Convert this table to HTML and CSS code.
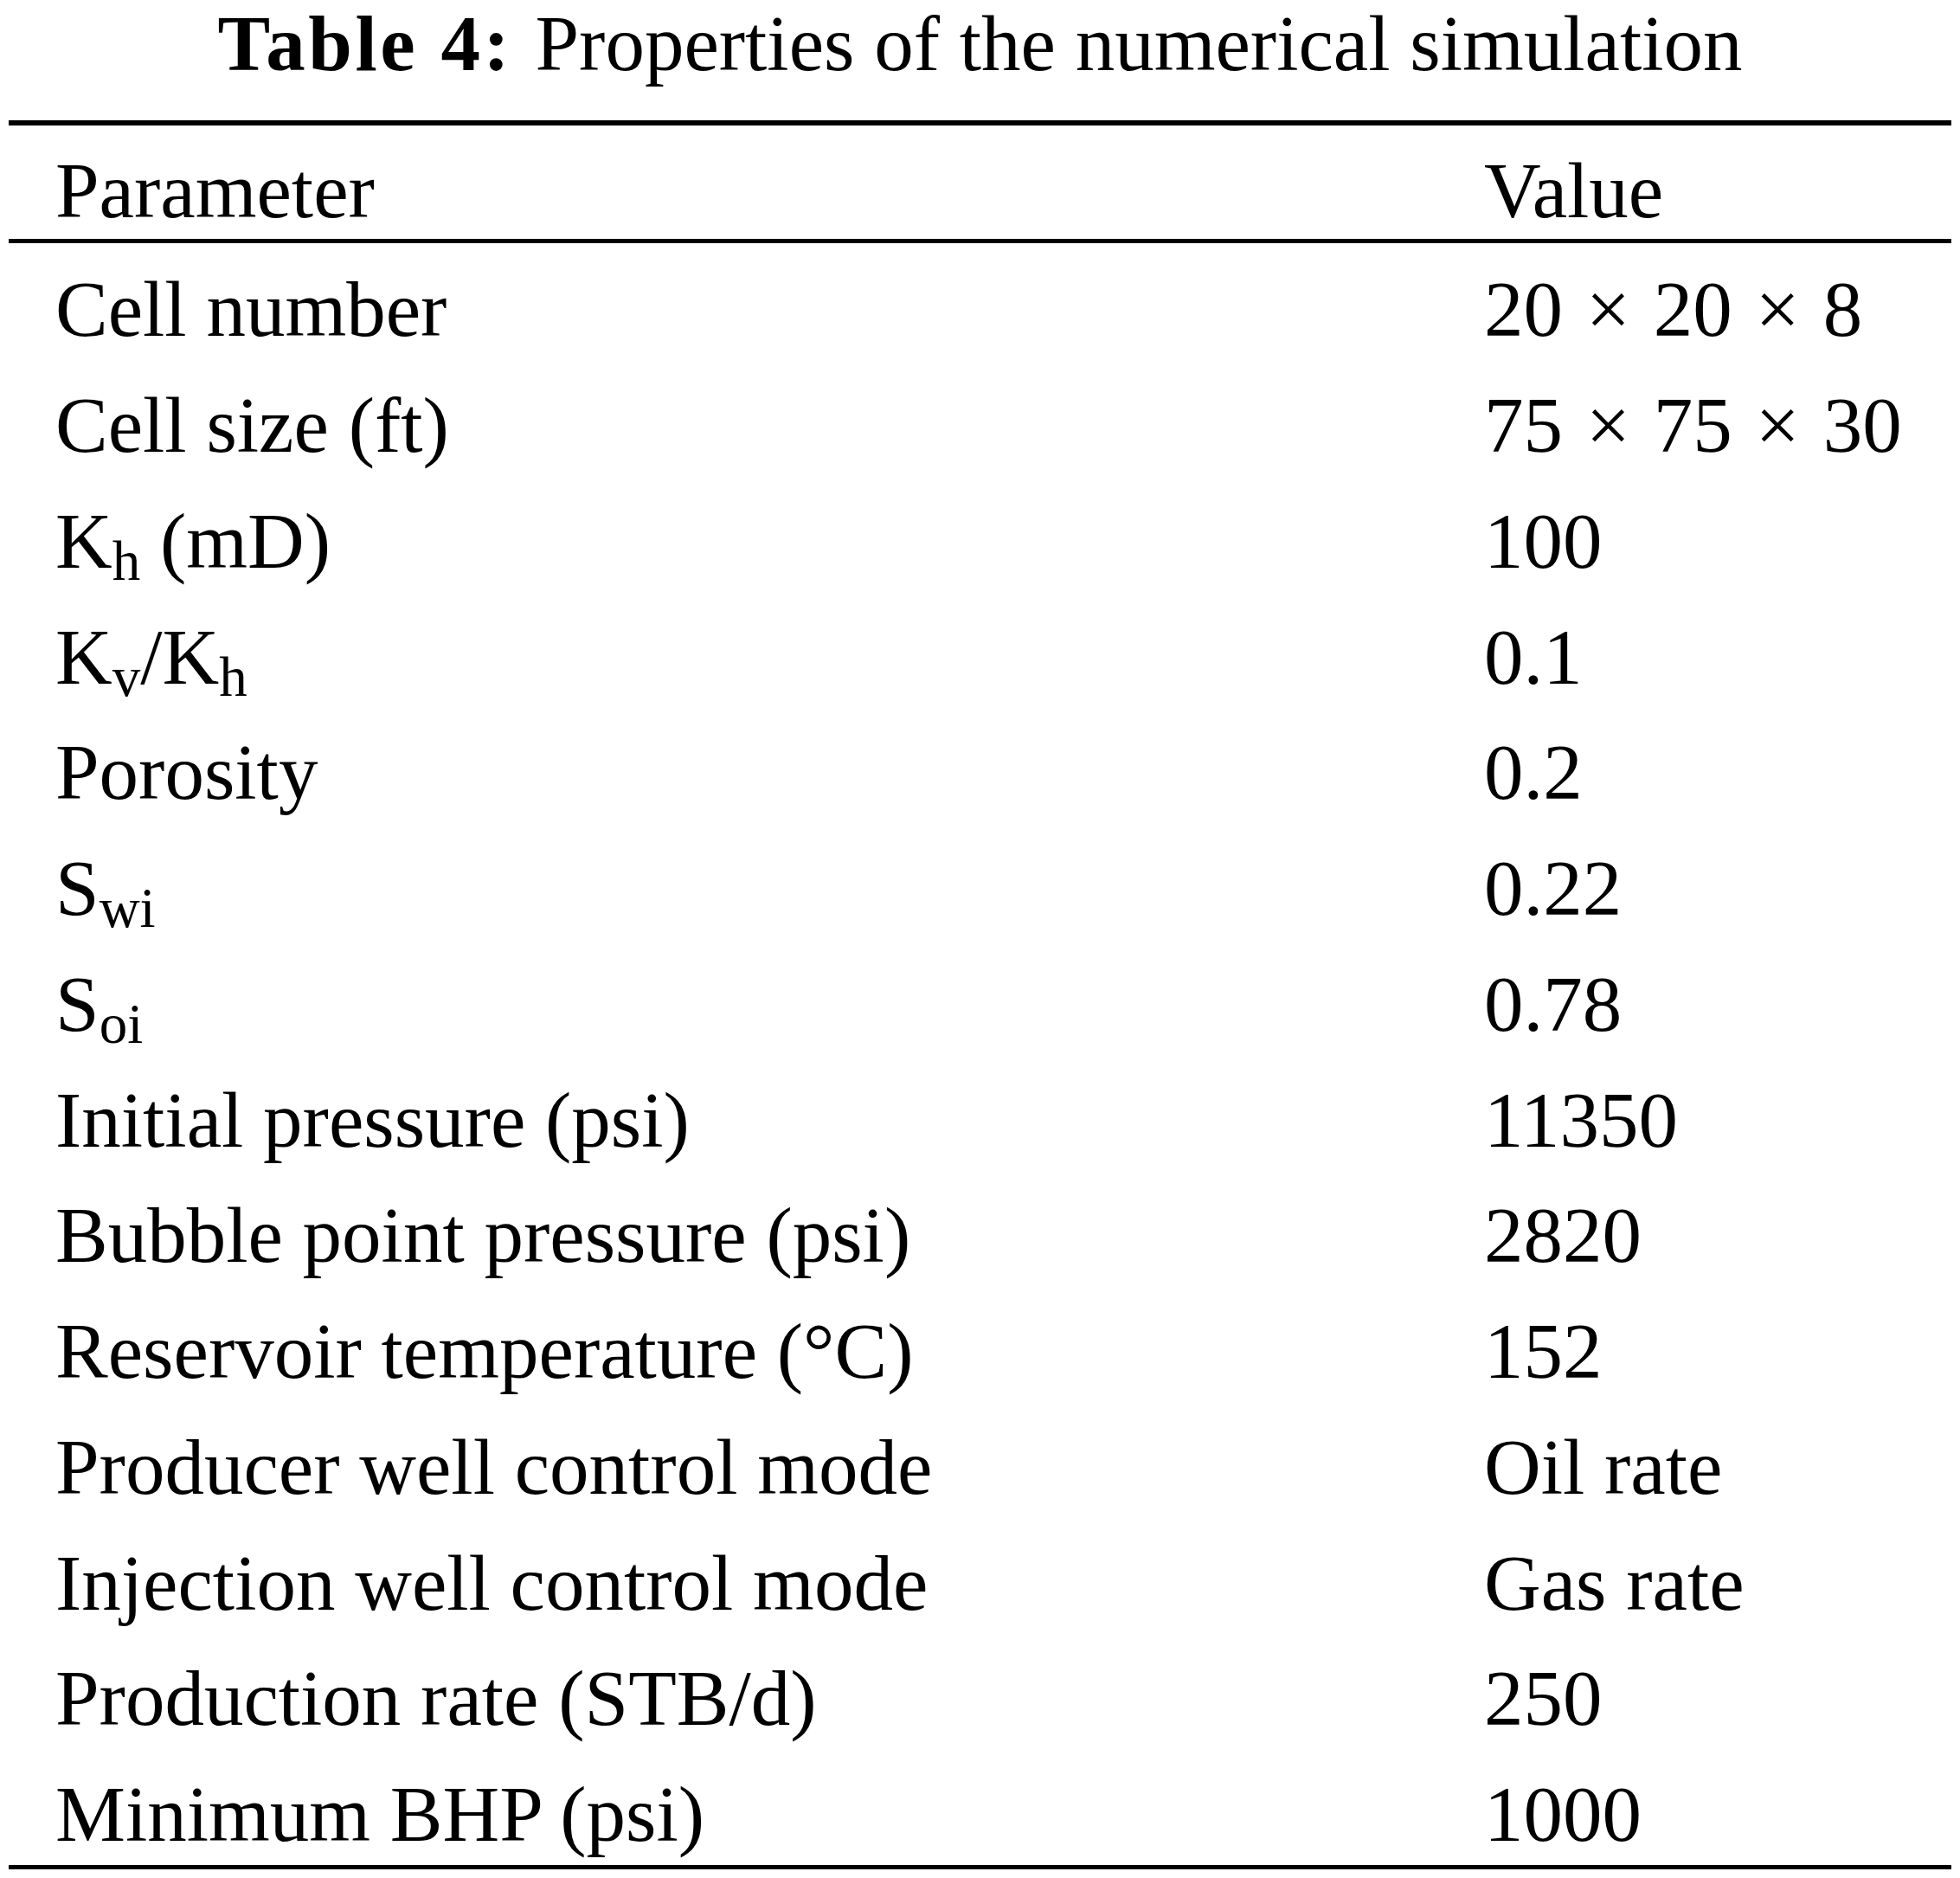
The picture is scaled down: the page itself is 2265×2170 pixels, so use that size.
FILE: index.html
```html
<!DOCTYPE html>
<html lang="en">
<head>
<meta charset="utf-8">
<title>Table 4: Properties of the numerical simulation</title>
<link rel="stylesheet" href="styles.css">
</head>
<body>
<div class="page">
  <h1 class="title"><b>Table 4: </b>Properties of the numerical simulation</h1>
  <div class="table">
    <div class="row head">
      <div class="cell">Parameter</div>
      <div class="cell">Value</div>
    </div>
    <div class="body">
      <div class="row"><div class="cell">Cell number</div><div class="cell">20 <span class="x">×</span> 20 <span class="x">×</span> 8</div></div>
      <div class="row"><div class="cell">Cell size (ft)</div><div class="cell">75 <span class="x">×</span> 75 <span class="x">×</span> 30</div></div>
      <div class="row"><div class="cell">K<sub>h</sub> (mD)</div><div class="cell">100</div></div>
      <div class="row"><div class="cell">K<sub>v</sub>/K<sub>h</sub></div><div class="cell">0.1</div></div>
      <div class="row"><div class="cell">Porosity</div><div class="cell">0.2</div></div>
      <div class="row"><div class="cell">S<sub>wi</sub></div><div class="cell">0.22</div></div>
      <div class="row"><div class="cell">S<sub>oi</sub></div><div class="cell">0.78</div></div>
      <div class="row"><div class="cell">Initial pressure (psi)</div><div class="cell">11350</div></div>
      <div class="row"><div class="cell">Bubble point pressure (psi)</div><div class="cell">2820</div></div>
      <div class="row"><div class="cell">Reservoir temperature (°C)</div><div class="cell">152</div></div>
      <div class="row"><div class="cell">Producer well control mode</div><div class="cell">Oil rate</div></div>
      <div class="row"><div class="cell">Injection well control mode</div><div class="cell">Gas rate</div></div>
      <div class="row"><div class="cell">Production rate (STB/d)</div><div class="cell">250</div></div>
      <div class="row"><div class="cell">Minimum BHP (psi)</div><div class="cell">1000</div></div>
    </div>
  </div>
</div>
</body>
</html>
```

FILE: styles.css
```css
html, body {
  margin: 0;
  padding: 0;
  background: #ffffff;
}

body {
  font-family: "Liberation Serif", "Times New Roman", serif;
  color: #000000;
  font-size: 91px;
}

.page {
  width: 2245px;
  padding: 0 10px;
}

.title {
  margin: 0 0 37px;
  font-size: 91px;
  font-weight: normal;
  line-height: 102px;
  text-align: center;
  white-space: nowrap;
}

.title b {
  font-weight: bold;
  letter-spacing: 3.5px;
}

.table {
  border-top: 6px solid #000000;
  border-bottom: 5px solid #000000;
}

.row {
  display: grid;
  grid-template-columns: 1651px 1fr;
  padding-left: 54px;
  line-height: 100px;
  height: 100px;
  white-space: nowrap;
}

.head {
  padding-top: 26.25px;
  padding-bottom: 4.75px;
  border-bottom: 5px solid #000000;
}

.body {
  display: flex;
  flex-direction: column;
  gap: 33.75px;
  padding-top: 27.25px;
  padding-bottom: 8px;
}

.x {
  margin: 0 4px;
}

sub {
  font-size: 65px;
  line-height: 0;
  vertical-align: -14px;
}
```
